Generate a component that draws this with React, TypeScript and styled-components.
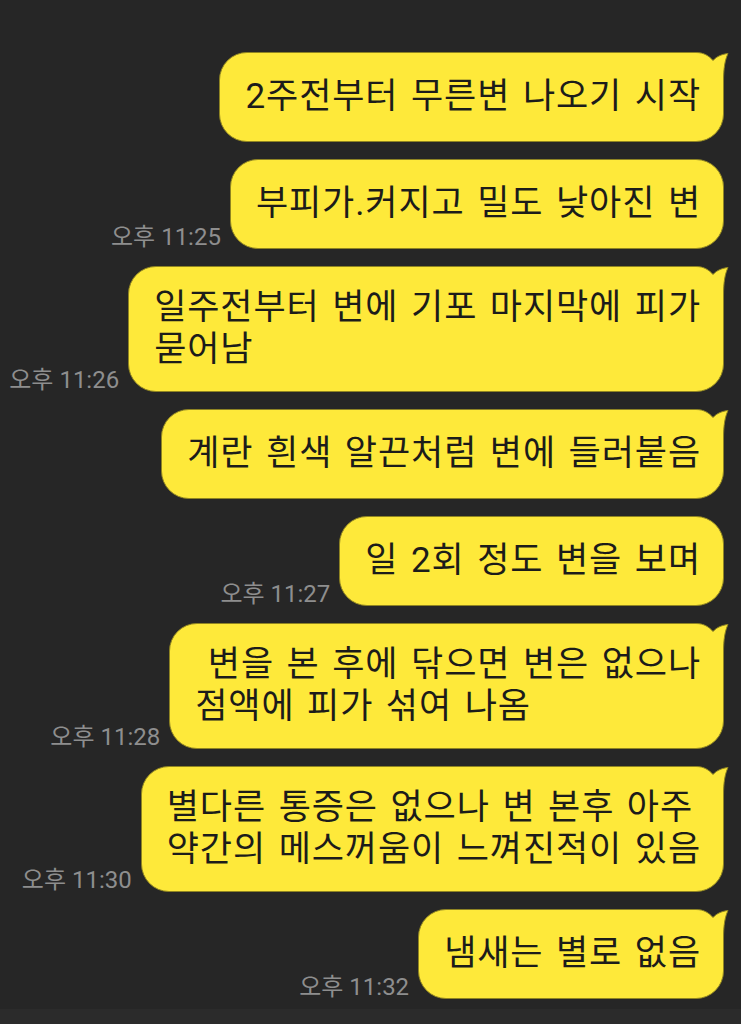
import React, { FC } from 'react';
import styled, { createGlobalStyle } from 'styled-components';

const BG = '#262626';
const YELLOW = '#fee93a';
const EDGE = '#8f8422';

const GlobalStyle = createGlobalStyle`
    html, body {
        margin: 0;
        padding: 0;
        background: ${BG};
    }
`;

const Screen = styled.div`
    width: 741px;
    height: 1024px;
    background: ${BG};
    display: flex;
    flex-direction: column;
    overflow: hidden;
`;

const Feed = styled.div`
    flex: 1;
    display: flex;
    flex-direction: column;
    gap: 17px;
    padding: 52px 17px 0 0;
`;

const Row = styled.div`
    display: flex;
    justify-content: flex-end;
    align-items: flex-end;
    gap: 9px;
`;

const Time = styled.span`
    font-family: Roboto, 'Noto Sans CJK KR', sans-serif;
    font-size: 24px;
    line-height: 24px;
    color: #8e8e8e;
    white-space: nowrap;
`;

const Bubble = styled.div<{ $tail?: boolean }>`
    position: relative;
    box-sizing: border-box;
    min-height: 90px;
    display: flex;
    flex-direction: column;
    justify-content: center;
    padding: 20px 22px 20px 25px;
    background: ${YELLOW};
    border: 1px solid ${EDGE};
    border-radius: 28px;
    border-top-right-radius: ${(p) => (p.$tail ? '0' : '28px')};
`;

const Line = styled.span`
    position: relative;
    font-family: Roboto, 'Noto Sans CJK KR', sans-serif;
    font-size: 35px;
    letter-spacing: 0.9px;
    word-spacing: 3px;
    line-height: 42px;
    color: #1c1c1a;
    white-space: pre;
`;

const TailSvg = styled.svg`
    position: absolute;
    top: -1px;
    right: -7px;
    width: 38px;
    height: 36px;
`;

const Tail: FC = () => (
    <TailSvg viewBox="0 0 38 36">
        <rect x={0} y={0} width={38} height={36} fill={BG} />
        <path
            d="M0,0.5 L4,0.5 C12,0.5 17,4 21,8.5 C25,4 31,2 36,1.5 C33,8 31.5,16 31.5,30 L31.5,36 L0,36 Z"
            fill={YELLOW}
        />
        <path
            d="M0,0.5 L4,0.5 C12,0.5 17,4 21,8.5 C25,4 31,2 36,1.5 C33,8 31.5,16 31.5,30 L31.5,36"
            fill="none"
            stroke={EDGE}
            strokeWidth={1}
        />
    </TailSvg>
);

const Footer = styled.div`
    height: 15px;
    background: #2b2b2b;
`;

interface Message {
    lines: string[];
    tail?: boolean;
    time?: string;
}

const messages: Message[] = [
    { lines: ['2주전부터 무른변 나오기 시작'], tail: true },
    { lines: ['부피가.커지고 밀도 낮아진 변'], time: '오후 11:25' },
    { lines: ['일주전부터 변에 기포 마지막에 피가', '묻어남'], tail: true, time: '오후 11:26' },
    { lines: ['계란 흰색 알끈처럼 변에 들러붙음'], tail: true },
    { lines: ['일 2회 정도 변을 보며'], time: '오후 11:27' },
    { lines: [' 변을 본 후에 닦으면 변은 없으나', '점액에 피가 섞여 나옴'], tail: true, time: '오후 11:28' },
    { lines: ['별다른 통증은 없으나 변 본후 아주', '약간의 메스꺼움이 느껴진적이 있음'], tail: true, time: '오후 11:30' },
    { lines: ['냄새는 별로 없음'], tail: true, time: '오후 11:32' },
];

const App: FC = () => {
    return (
        <Screen>
            <GlobalStyle />
            <Feed>
                {messages.map((m, i) => (
                    <Row key={i}>
                        {m.time && <Time>{m.time}</Time>}
                        <Bubble $tail={m.tail}>
                            {m.tail && <Tail />}
                            {m.lines.map((l, j) => (
                                <Line key={j}>{l}</Line>
                            ))}
                        </Bubble>
                    </Row>
                ))}
            </Feed>
            <Footer />
        </Screen>
    );
};

export default App;
